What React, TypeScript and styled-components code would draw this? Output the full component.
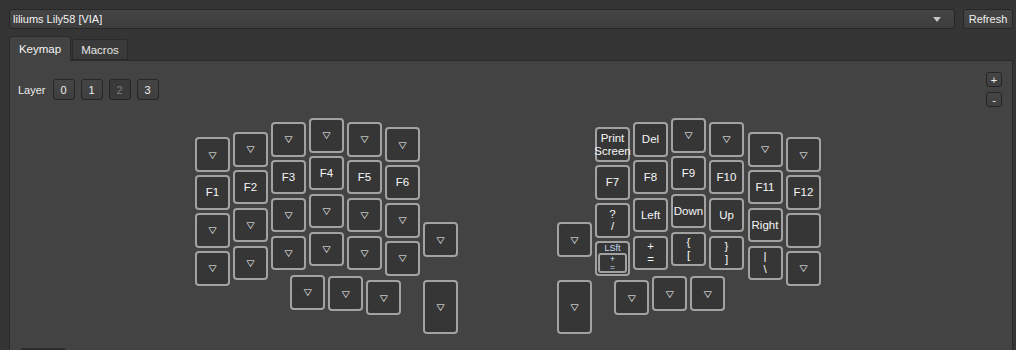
import React from 'react';
import styled, { createGlobalStyle } from 'styled-components';

const GlobalStyle = createGlobalStyle`
  html, body {
    margin: 0;
    padding: 0;
    background: #353535;
  }
  body {
    width: 1016px;
    height: 350px;
    overflow: hidden;
    font-family: "Liberation Sans", Arial, sans-serif;
    font-size: 11px;
    color: #ececec;
  }
`;

const Window = styled.div`
  box-sizing: border-box;
  width: 1016px;
  height: 350px;
  padding: 9px 3px 0 9px;
  display: flex;
  flex-direction: column;
  overflow: hidden;
`;

const TopBar = styled.div`
  display: flex;
  gap: 8px;
  height: 20px;
`;

const Combo = styled.div`
  flex: 1;
  box-sizing: border-box;
  display: flex;
  align-items: center;
  justify-content: space-between;
  padding: 0 13px 0 3px;

  border: 1px solid #262626;
  border-radius: 3px;
  background: linear-gradient(#444444, #3d3d3d);
  color: #f2f2f2;
`;

const ComboArrow = styled.span`
  width: 0;
  height: 0;
  border-left: 4.5px solid transparent;
  border-right: 4.5px solid transparent;
  border-top: 5px solid #c4c4c4;
`;

const PushButton = styled.div<{ $w: number; $h: number; $dim?: boolean }>`
  box-sizing: border-box;
  width: ${(p) => p.$w}px;
  height: ${(p) => p.$h}px;
  display: flex;
  align-items: center;
  justify-content: center;

  border: 1px solid #262626;
  border-radius: 3px;
  background: ${(p) => (p.$dim ? '#3a3a3a' : 'linear-gradient(#454545, #3e3e3e)')};
  color: ${(p) => (p.$dim ? '#7c7c7c' : '#f0f0f0')};
`;

const TabBar = styled.div`
  position: relative;
  z-index: 1;
  display: flex;
  align-items: flex-end;
  gap: 1px;
  height: 24px;
  margin-top: 7px;
`;

const Tab = styled.div<{ $active?: boolean; $w: number }>`
  box-sizing: border-box;
  width: ${(p) => p.$w}px;
  height: ${(p) => (p.$active ? 25 : 21)}px;
  margin-bottom: ${(p) => (p.$active ? -1 : 0)}px;
  display: flex;
  align-items: center;
  justify-content: center;
  padding-bottom: ${(p) => (p.$active ? 1 : 0)}px;

  border: 1px solid #2a2a2a;
  border-bottom: ${(p) => (p.$active ? 'none' : '1px solid #2a2a2a')};
  border-radius: 3px 3px 0 0;
  background: ${(p) => (p.$active ? '#434343' : '#3a3a3a')};
  color: ${(p) => (p.$active ? '#f4f4f4' : '#e6e6e6')};
  font-size: 11.5px;
`;

const Panel = styled.div`
  flex: 1;
  box-sizing: border-box;
  padding: 11px 10px 0 8px;
  display: flex;
  flex-direction: column;

  border: 1px solid #2a2a2a;
  border-bottom: none;
  background: #434343;
`;

const TopRow = styled.div`
  display: flex;
  justify-content: space-between;
  align-items: flex-start;
  height: 35px;
`;

const LayerRow = styled.div`
  display: flex;
  align-items: center;
  gap: 6px;
  margin-top: 7px;
`;

const LayerLabel = styled.span`
  margin-right: 1px;
  color: #ececec;
`;

const ZoomColumn = styled.div`
  display: flex;
  flex-direction: column;
  gap: 5px;
`;

const Canvas = styled.div`
  position: relative;
  width: 627px;
  height: 216px;
  margin: 11px 0 0 177px;
`;

const Key = styled.div<{ $tall?: boolean }>`
  position: absolute;
  box-sizing: border-box;
  width: 35px;
  height: ${(p) => (p.$tall ? 53.5 : 34.5)}px;
  display: flex;
  flex-direction: column;
  align-items: center;
  justify-content: center;

  border: 2px solid #a2a2a2;
  border-radius: 4px;
  background: #363636;
  color: #f6f6f6;
  font-size: 11.5px;
  line-height: 12.5px;
  text-align: center;
  white-space: nowrap;
`;

const Trns = styled.span`
  display: inline-block;
  font-family: "DejaVu Sans", sans-serif;
  font-size: 10.5px;
  line-height: 10px;
  color: #ffffff;
  transform: scaleY(0.8);
`;

const MaskKey = styled(Key)`
  justify-content: flex-start;
`;

const ModLabel = styled.span`
  height: 10px;
  font-size: 9px;
  line-height: 10px;
  color: #c6dcf4;
`;

const InnerKey = styled.div`
  box-sizing: border-box;
  width: 29px;
  height: 20px;
  display: flex;
  flex-direction: column;
  align-items: center;
  justify-content: center;

  border: 2px solid #a2a2a2;
  border-radius: 3px;
  font-size: 8.5px;
  line-height: 8px;
  color: #cfe2f6;
`;

const BottomTab = styled.div`
  width: 46px;
  height: 6px;
  margin: 14px 0 0 2px;
  border-radius: 3px 3px 0 0;
  background: #2c2c2c;
`;

type KeyDef = {
  x: number;
  y: number;
  label: string[];
  tall?: boolean;
  mod?: string;
};

const T = ['▽'];
const VP = 37.9;

const leftCols = [
  { x: 0, y: 19.4, labels: [T, ['F1'], T, T] },
  { x: 38, y: 14, labels: [T, ['F2'], T, T] },
  { x: 76, y: 4, labels: [T, ['F3'], T, T] },
  { x: 114, y: 0, labels: [T, ['F4'], T, T] },
  { x: 152, y: 4, labels: [T, ['F5'], T, T] },
  { x: 190, y: 9.4, labels: [T, ['F6'], T, T] },
];

const rightCols = [
  { x: 400, y: 9.4, labels: [['Print', 'Screen'], ['F7'], ['?', '/'], ['+', '=']] },
  { x: 438, y: 4, labels: [['Del'], ['F8'], ['Left'], ['+', '=']] },
  { x: 476, y: 0, labels: [T, ['F9'], ['Down'], ['{', '[']] },
  { x: 514, y: 4, labels: [T, ['F10'], ['Up'], ['}', ']']] },
  { x: 552.5, y: 14, labels: [T, ['F11'], ['Right'], ['|', '\\']] },
  { x: 591, y: 19.4, labels: [T, ['F12'], [], T] },
];

const keys: KeyDef[] = [];

leftCols.concat(rightCols).forEach((col) => {
  col.labels.forEach((label, row) => {
    keys.push({ x: col.x, y: col.y + row * VP, label });
  });
});

// the mod-tap key on the right half
keys[27].mod = 'LSft';

keys.push(
  { x: 228, y: 104.4, label: T },
  { x: 95.4, y: 157, label: T },
  { x: 133.4, y: 158.4, label: T },
  { x: 171.4, y: 162.4, label: T },
  { x: 228, y: 162.4, label: T, tall: true },
  { x: 362, y: 104.4, label: T },
  { x: 362, y: 162.4, label: T, tall: true },
  { x: 419.4, y: 162.4, label: T },
  { x: 457.4, y: 158.4, label: T },
  { x: 495.4, y: 158.4, label: T },
);

const renderLabel = (label: string[]) =>
  label.map((line, i) =>
    line === '▽' ? <Trns key={i}>{line}</Trns> : <span key={i}>{line}</span>,
  );

export default function App() {
  return (
    <>
      <GlobalStyle />
      <Window>
        <TopBar>
          <Combo>
            <span>liliums Lily58 [VIA]</span>
            <ComboArrow />
          </Combo>
          <PushButton $w={50} $h={20}>
            Refresh
          </PushButton>
        </TopBar>

        <TabBar>
          <Tab $active $w={62}>
            Keymap
          </Tab>
          <Tab $w={56}>Macros</Tab>
        </TabBar>

        <Panel>
          <TopRow>
            <LayerRow>
              <LayerLabel>Layer</LayerLabel>
              {['0', '1', '2', '3'].map((l) => (
                <PushButton key={l} $w={22} $h={21} $dim={l === '2'}>
                  {l}
                </PushButton>
              ))}
            </LayerRow>
            <ZoomColumn>
              <PushButton $w={16} $h={15}>
                +
              </PushButton>
              <PushButton $w={16} $h={15}>
                -
              </PushButton>
            </ZoomColumn>
          </TopRow>

          <Canvas>
            {keys.map((k, i) =>
              k.mod ? (
                <MaskKey key={i} style={{ left: k.x, top: k.y }}>
                  <ModLabel>{k.mod}</ModLabel>
                  <InnerKey>{renderLabel(k.label)}</InnerKey>
                </MaskKey>
              ) : (
                <Key key={i} $tall={k.tall} style={{ left: k.x, top: k.y }}>
                  {renderLabel(k.label)}
                </Key>
              ),
            )}
          </Canvas>

          <BottomTab />
        </Panel>
      </Window>
    </>
  );
}
